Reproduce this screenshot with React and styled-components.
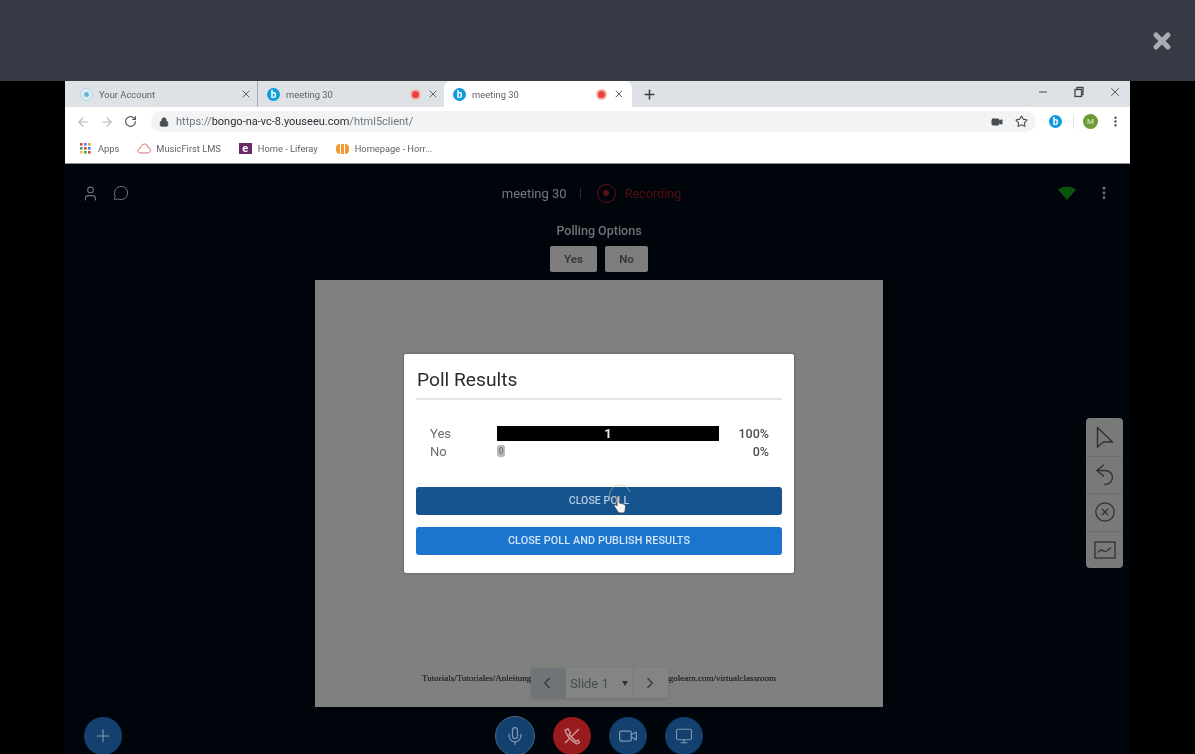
import React from 'react';
import styled, { createGlobalStyle } from 'styled-components';
import { ArrowLeft, ArrowRight, RotateCw, Lock, Video, Star, EllipsisVertical, Plus, X, Minus, User, MessageCircle, Mic, Monitor, ChevronLeft, ChevronRight, CircleX } from 'lucide-react';

const Global = createGlobalStyle`
  html, body { margin: 0; padding: 0; background: #000; }
  * { box-sizing: border-box; }
  body { font-family: Roboto, "Liberation Sans", sans-serif; }
`;
const Page = styled.div`width: 1195px; height: 754px; overflow: hidden; display: flex; flex-direction: column; background: #000; filter: blur(0.4px);`;
const TopBar = styled.div`height: 81px; flex: none; background: #373b45; display: flex; align-items: center; justify-content: flex-end; padding-right: 21px;`;
const Stage = styled.div`flex: 1; min-height: 0; display: flex; padding: 0 65px; background: #000;`;
const Frame = styled.div`width: 1065px; display: flex; flex-direction: column;`;

const TabStrip = styled.div`height: 26px; flex: none; background: #dee1e6; display: flex; align-items: center; color: #5f6368;`;
const Tab = styled.div`
  height: 26px; display: flex; align-items: center; flex: none;
  width: ${p => p.$w}px; padding: 0 ${p => p.$pr}px 0 ${p => p.$pl}px;
  background: ${p => p.$active ? '#fff' : 'transparent'};
  border-radius: ${p => p.$active ? '7px 7px 0 0' : '0'};
  border-right: ${p => p.$sep ? '1px solid #a9adb3' : 'none'};
  font-size: 9.4px; color: #5f6368;
`;
const TabTitle = styled.span`flex: 1; margin-left: ${p => p.$ml || 6}px; white-space: nowrap;`;
const Ring = styled.span`width: 13px; height: 13px; border-radius: 50%; background: #dcecf5; border: 1.5px solid #b4d6e8; display: flex; align-items: center; justify-content: center; &::after { content: ''; width: 5px; height: 5px; border-radius: 50%; background: #6ab2d9; }`;
const BFav = styled.span`width: 13px; height: 13px; border-radius: 50%; background: #0f9bdc; color: #fff; font-size: 10px; font-weight: 700; line-height: 13px; text-align: center; flex: none;`;
const RecDot = styled.span`width: 11px; height: 11px; border-radius: 50%; background: #e8433a; border: 2px solid #f1b5ae; flex: none; margin-right: ${p => p.$mr}px;`;
const NewTab = styled.span`margin-left: 10px; display: flex; color: #3c4043;`;
const WinCtl = styled.div`margin-left: auto; display: flex; align-items: center; gap: 23.5px; padding-right: 8px; margin-top: -4px; color: #444;`;
const RestoreIcon = styled.svg`display: block;`;

const AddressRow = styled.div`height: 27px; flex: none; background: #fff; display: flex; align-items: center; padding: 2px 0 0 11px; color: #5f6368;`;
const NavIcon = styled.span`display: flex; width: ${p => p.$w || 24}px; color: ${p => p.$dim ? '#b5b8bc' : '#55585c'};`;
const Omni = styled.div`width: 885px; height: 21px; border-radius: 11px; background: #f1f3f4; display: flex; align-items: center; padding: 0 8px 0 8px;`;
const Url = styled.span`font-size: 11px; color: #73777b; margin-left: 7px; flex: 1; white-space: nowrap; b { font-weight: 400; color: #2c2e31; }`;
const OmniIcons = styled.span`display: flex; align-items: center; gap: 12px; color: #4a4d50;`;
const Extensions = styled.div`display: flex; align-items: center; margin-left: 13px;`;
const ExtSep = styled.span`width: 1px; height: 14px; background: #dfe1e3; margin: 0 9px 0 11px;`;
const Avatar = styled.span`width: 15px; height: 15px; border-radius: 50%; background: #6c9a33; color: #e4f0d4; font-size: 8px; line-height: 15px; text-align: center;`;
const Kebab = styled.span`display: flex; margin-left: 11px; color: #4a4d50;`;

const Bookmarks = styled.div`height: 30px; flex: none; background: #fff; border-bottom: 1px solid #8f8f8f; display: flex; align-items: center; padding-left: 15px; gap: 18px; font-size: 9.3px; color: #5f6368;`;
const Bookmark = styled.span`display: flex; align-items: center; gap: ${p => p.$gap || 6}px; white-space: nowrap;`;
const LetterFav = styled.span`width: 13px; height: 11px; background: #6b2a66; color: #fff; font-size: 11px; font-weight: 700; line-height: 11px; text-align: center;`;

const AppArea = styled.div`flex: 1; min-height: 0; position: relative; background: #00050c; display: flex; flex-direction: column;`;
const Header = styled.div`height: 58px; flex: none; display: grid; grid-template-columns: 1fr auto 1fr; align-items: center; padding: 0 18px 0 17px;`;
const HeadLeft = styled.div`display: flex; gap: 14px; color: #6f7377; align-items: center;`;
const HeadCenter = styled.div`display: flex; align-items: center; margin-right: 11px; font-size: 13px; color: #74787c;`;
const Divider = styled.span`width: 1px; height: 10px; background: #2a2e33; margin: 0 16px 0 13px;`;
const RecIcon = styled.span`width: 19px; height: 19px; border-radius: 50%; border: 1.5px solid #621017; display: flex; align-items: center; justify-content: center; &::after { content: ''; width: 6px; height: 6px; border-radius: 50%; background: #621017; }`;
const RecLabel = styled.span`margin-left: 9px; color: #560d13; font-size: 12.6px;`;
const HeadRight = styled.div`display: flex; align-items: center; justify-content: flex-end; gap: 20px; color: #6f7377;`;

const Polling = styled.div`flex: none; display: flex; flex-direction: column; align-items: center; margin-top: 1px; padding-left: 3px;`;
const PollTitle = styled.div`font-size: 12.5px; font-weight: 500; color: #707375; line-height: 15px;`;
const PollButtons = styled.div`display: flex; gap: 8px; margin-top: 8px;`;
const PollButton = styled.div`height: 26px; width: ${p => p.$w}px; background: #7e7e7e; border-radius: 2px; color: #36383a; font-size: 11.5px; font-weight: 700; display: flex; align-items: center; justify-content: center;`;

const SlideWrap = styled.div`flex: none; display: flex; justify-content: center; margin-top: 8px; padding-left: 3px;`;
const Slide = styled.div`width: 568px; height: 427px; background: #7f817f; position: relative; display: flex; align-items: flex-end; justify-content: center; padding-bottom: 24px;`;
const Caption = styled.div`font-family: "Liberation Serif", serif; font-size: 9px; color: #2c2d2d; text-shadow: 0 0 .3px #2c2d2d; white-space: nowrap; display: flex; width: 354px; justify-content: space-between;`;
const SlideControls = styled.div`position: absolute; left: 216px; bottom: 9px; display: flex; height: 30px; background: #838584; border-radius: 3px; box-shadow: 0 1px 3px rgba(0,0,0,.15); color: #333;`;
const CtlBtn = styled.div`width: 35px; padding-right: 3px; display: flex; align-items: center; justify-content: center; background: ${p => p.$dark ? '#707476' : 'transparent'}; border-left: ${p => p.$line ? '1px solid #777978' : 'none'}; border-radius: ${p => p.$dark ? '3px 0 0 3px' : '0'};`;
const SlideSelect = styled.div`width: 67px; display: flex; align-items: center; justify-content: space-between; padding: 0 5px 0 4px; font-size: 13px; color: #484b4c; &::after { content: ''; border-left: 3px solid transparent; border-right: 3px solid transparent; border-top: 5px solid #333; }`;

const Modal = styled.div`position: absolute; left: 89px; top: 74px; width: 390px; height: 219px; background: #fff; border-radius: 2px; box-shadow: 0 0 3px rgba(40,40,40,.5); padding: 0 12px;`;
const ModalTitle = styled.div`height: 46px; border-bottom: 2px solid #e3e6e9; font-size: 19.2px; color: #2b2b2b; line-height: 52px; padding-left: 1px; display: flex; align-items: flex-start;`;
const Rows = styled.div`display: grid; grid-template-columns: 67px 222px 1fr; grid-auto-rows: 18px; padding: 24px 13px 0 14px; align-items: center; font-size: 13px; color: #6a6d70;`;
const Bar = styled.div`height: ${p => p.$h}px; width: ${p => p.$w}px; background: ${p => p.$bg}; color: ${p => p.$c}; border-radius: ${p => p.$r || 0}px; font-size: ${p => p.$fs}px; font-weight: 700; display: flex; align-items: center; justify-content: center;`;
const Pct = styled.div`text-align: right; font-weight: 500; color: #4b4d50; font-size: 12.5px;`;
const Actions = styled.div`display: flex; flex-direction: column; gap: 12px; margin-top: 27px;`;
const ActionBtn = styled.div`height: 28px; border-radius: 3px; background: ${p => p.$bg}; color: ${p => p.$c}; font-size: ${p => p.$fs}px; font-weight: 500; display: flex; align-items: center; justify-content: center; letter-spacing: .1px; position: relative; padding-bottom: 1px;`;
const Pointer = styled.svg`position: absolute; left: 188px; top: -8px;`;

const Toolbar = styled.div`position: absolute; right: 7px; top: 254px; width: 37px; background: #787979; border-radius: 4px; display: flex; flex-direction: column; color: #2f3235;`;
const ToolBtn = styled.div`height: 37.5px; display: flex; align-items: center; justify-content: center; border-top: ${p => p.$line ? '1px solid #6d6e6e' : 'none'};`;

const Footer = styled.div`flex: 1; min-height: 0; display: grid; grid-template-columns: 1fr auto 1fr; padding: 9px 0 0 3px; align-items: start;`;
const FootLeft = styled.div`padding-left: 16px; padding-top: 1px;`;
const FootCenter = styled.div`display: flex; align-items: flex-start; gap: 18px;`;
const RoundBtn = styled.div`width: ${p => p.$s || 38}px; height: ${p => p.$s || 38}px; margin-top: ${p => p.$mt ?? 1}px; border-radius: 50%; background: ${p => p.$bg || '#144070'}; color: ${p => p.$c || '#8196ad'}; border: ${p => p.$ring ? '1px solid #456484' : 'none'}; display: flex; align-items: center; justify-content: center; flex: none;`;

const CutPhone = () => (
  <svg width="18" height="18" viewBox="0 0 18 18" fill="none" stroke="#cf9c9c" strokeWidth="1.4" strokeLinecap="round" strokeLinejoin="round">
    <path d="M2.500 3L5 1.800 7.500 6 6 7.500 13 14.500 15 13 16.500 15.500C15 17 13 16.800 11.500 15.500 8 13 4.500 9 3 6 2.500 5 2.300 4 2.500 3z" />
    <path d="M15.500 2.500L9 9M7 11L2.500 15.500" />
  </svg>
);

export default function App() {
  return (
    <>
      <Global />
      <Page>
        <TopBar><X size={24} color="#a9adb3" strokeWidth={5} /></TopBar>
        <Stage>
          <Frame>
            <TabStrip>
              <Tab $w={193} $pl={15} $pr={5} $sep>
                <Ring /><TabTitle>Your Account</TabTitle><X size={12} strokeWidth={2} />
              </Tab>
              <Tab $w={186} $pl={9} $pr={5}>
                <BFav>b</BFav><TabTitle>meeting 30</TabTitle><RecDot $mr={6} /><X size={12} strokeWidth={2} />
              </Tab>
              <Tab $w={188} $pl={9} $pr={7} $active>
                <BFav>b</BFav><TabTitle>meeting 30</TabTitle><RecDot $mr={6} /><X size={12} strokeWidth={2} />
              </Tab>
              <NewTab><Plus size={15} strokeWidth={2.4} /></NewTab>
              <WinCtl>
                <Minus size={12} />
                <RestoreIcon width="12" height="12" viewBox="0 0 12 12" fill="none" stroke="#444" strokeWidth="1.3"><rect x="2" y="3.500" width="6.500" height="7" /><path d="M4 3.500V1.500h6v7H8.500" /></RestoreIcon>
                <X size={14} strokeWidth={1.5} />
              </WinCtl>
            </TabStrip>
            <AddressRow>
              <NavIcon $dim><ArrowLeft size={14} /></NavIcon>
              <NavIcon $dim><ArrowRight size={14} /></NavIcon>
              <NavIcon $w={27}><RotateCw size={13} strokeWidth={2.2} /></NavIcon>
              <Omni>
                <Lock size={10} fill="#4a4d50" color="#4a4d50" />
                <Url>https://<b>bongo-na-vc-8.youseeu.com</b>/html5client/</Url>
                <OmniIcons><Video size={12} fill="#4a4d50" /><Star size={13} /></OmniIcons>
              </Omni>
              <Extensions>
                <BFav>b</BFav><ExtSep /><Avatar>M</Avatar>
                <Kebab><EllipsisVertical size={13} strokeWidth={2.4} /></Kebab>
              </Extensions>
            </AddressRow>
            <Bookmarks>
              <Bookmark $gap={7}>
                <svg width="11" height="11" viewBox="0 0 11 11">
                  {[0, 1, 2].flatMap(r => [0, 1, 2].map(c => (
                    <rect key={`${r}${c}`} x={c * 4} y={r * 4} width="2.600" height="2.600" fill={['#d9483b', '#4285f4', '#e8a33d', '#3fa45b', '#d9483b', '#4285f4', '#e8c33d', '#3fa45b', '#d9483b'][r * 3 + c]} />
                  )))}
                </svg>
                Apps
              </Bookmark>
              <Bookmark $gap={5}>
                <svg width="14" height="11" viewBox="0 0 14 11" fill="#fff" stroke="#dc6a6a" strokeWidth="1"><path d="M3.500 10C1.500 10 .6 8.500 1 7.200 1.300 6 2.300 5.500 3 5.500 3.500 3 5.500 1 7.500 1c2 0 3.300 1.500 3.500 3.300 1.500.3 2.500 1.500 2.500 3C13.500 9 12 10 10.500 10z" /></svg>
                MusicFirst LMS
              </Bookmark>
              <Bookmark><LetterFav>e</LetterFav>Home - Liferay</Bookmark>
              <Bookmark>
                <svg width="13" height="12" viewBox="0 0 13 12"><rect x="0" y="1" width="13" height="10" rx="4" fill="#ef9a32" /><path d="M4.500 1v10M8.500 1v10" stroke="#fff" strokeWidth="1" /></svg>
                Homepage - Horr...
              </Bookmark>
            </Bookmarks>
            <AppArea>
              <Header>
                <HeadLeft>
                  <User size={17} strokeWidth={1.5} />
                  <MessageCircle size={16} strokeWidth={1.5} />
                </HeadLeft>
                <HeadCenter>meeting 30<Divider /><RecIcon /><RecLabel>Recording</RecLabel></HeadCenter>
                <HeadRight>
                  <svg width="18" height="14" viewBox="0 0 18 14"><path d="M0 3.500C5 -.6 13 -.6 18 3.500L9 14z" fill="#0a540d" /></svg>
                  <EllipsisVertical size={16} strokeWidth={2.4} />
                </HeadRight>
              </Header>
              <Polling>
                <PollTitle>Polling Options</PollTitle>
                <PollButtons>
                  <PollButton $w={47}>Yes</PollButton>
                  <PollButton $w={43}>No</PollButton>
                </PollButtons>
              </Polling>
              <SlideWrap>
                <Slide>
                  <Caption><span>Tutorials/Tutoriales/Anleitung</span><span>bongolearn.com/virtualclassroom</span></Caption>
                  <SlideControls>
                    <CtlBtn $dark><ChevronLeft size={18} strokeWidth={1.6} /></CtlBtn>
                    <SlideSelect>Slide 1</SlideSelect>
                    <CtlBtn $line><ChevronRight size={18} strokeWidth={1.6} /></CtlBtn>
                  </SlideControls>
                  <Modal>
                    <ModalTitle>Poll Results</ModalTitle>
                    <Rows>
                      <div>Yes</div>
                      <Bar $h={15} $w={222} $bg="#000" $c="#e8e8e8" $fs={13}>1</Bar>
                      <Pct>100%</Pct>
                      <div>No</div>
                      <Bar $h={12} $w={8} $r={3} $bg="#b9b9b9" $c="#7d7d7d" $fs={9}>0</Bar>
                      <Pct>0%</Pct>
                    </Rows>
                    <Actions>
                      <ActionBtn $bg="#15548f" $c="#b7cde2" $fs={10.5}>
                        CLOSE POLL
                        <Pointer width="32" height="40" viewBox="0 0 32 40" fill="none">
                          <path d="M6 20A10 10 0 0 1 26 13" stroke="#c9c48a" strokeWidth=".8" opacity=".7" />
                          <path d="M13 18c0-1.500 2.200-1.500 2.200 0v6l4 .9c1.500.3 2.500 1.200 2.300 3l-.5 4c-.2 1-.8 2-2.200 2H16c-1 0-1.600-.5-2.200-1.300L10.500 27.500c-.7-1.200.8-2.300 1.800-1.200l.7.700z" fill="#f4f4f4" stroke="#444" strokeWidth=".8" strokeLinejoin="round" />
                        </Pointer>
                      </ActionBtn>
                      <ActionBtn $bg="#1b75cf" $c="#d5e6f6" $fs={10.8}>CLOSE POLL AND PUBLISH RESULTS</ActionBtn>
                    </Actions>
                  </Modal>
                </Slide>
              </SlideWrap>
              <Footer>
                <FootLeft><RoundBtn $mt={0}><Plus size={20} strokeWidth={1.4} /></RoundBtn></FootLeft>
                <FootCenter>
                  <RoundBtn $s={40} $mt={0} $ring><Mic size={20} strokeWidth={1.5} /></RoundBtn>
                  <RoundBtn $bg="#981c1e"><CutPhone /></RoundBtn>
                  <RoundBtn><Video size={20} strokeWidth={1.5} /></RoundBtn>
                  <RoundBtn><Monitor size={18} strokeWidth={1.5} /></RoundBtn>
                </FootCenter>
                <div />
              </Footer>
              <Toolbar>
                <ToolBtn>
                  <svg width="20" height="22" viewBox="0 0 20 22" fill="none" stroke="currentColor" strokeWidth="1.4" strokeLinejoin="round"><path d="M2.500 1.500L17.500 16 8.500 16 2.500 21z" /></svg>
                </ToolBtn>
                <ToolBtn $line>
                  <svg width="20" height="23" viewBox="0 0 20 23" fill="none" stroke="currentColor" strokeWidth="1.4" strokeLinecap="round" strokeLinejoin="round"><path d="M8.500 2L2 7.500 8.500 13" /><path d="M2 7.500H10c4.500 0 7.500 3 7.500 6.800S14.500 21.500 10 21.500" /></svg>
                </ToolBtn>
                <ToolBtn $line><CircleX size={22} strokeWidth={1.3} /></ToolBtn>
                <ToolBtn $line>
                  <svg width="22" height="18" viewBox="0 0 22 18" fill="none" stroke="currentColor" strokeWidth="1.3"><rect x="1" y="1" width="20" height="16" /><path d="M4 11.500c2-3 3.500-3 5.500-1.500s3.500 0 7.500-3.500" /></svg>
                </ToolBtn>
              </Toolbar>
            </AppArea>
          </Frame>
        </Stage>
      </Page>
    </>
  );
}
